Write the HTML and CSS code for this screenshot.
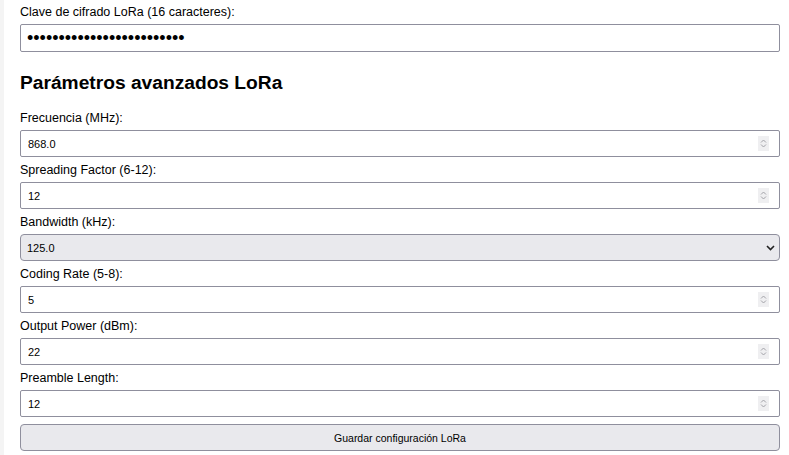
FILE: index.html
```html
<!DOCTYPE html>
<html lang="es">
<head>
    <meta charset="UTF-8">
    <meta name="viewport" content="width=device-width, initial-scale=1.0">
    <title>Configuración LoRa</title>
    <link rel="stylesheet" href="styles.css">
</head>
<body>
    <div class="panel">
        <label for="lora-key">Clave de cifrado LoRa (16 caracteres):</label>
        <input type="password" id="lora-key" class="field password" value="abcdefghijklmnopqrstuvwxy">

        <h2>Parámetros avanzados LoRa</h2>

        <label for="freq">Frecuencia (MHz):</label>
        <div class="num">
            <input type="number" id="freq" class="field" value="868.0" step="0.1">
            <svg class="spin" width="11" height="15" viewBox="0 0 11 15"><rect width="11" height="15" fill="#efeff1"/><path d="M3 6.5 L5.5 4 L8 6.5 M3 8.5 L5.5 11 L8 8.5" fill="none" stroke="#a2a2a8" stroke-width="1"/></svg>
        </div>

        <label for="sf">Spreading Factor (6-12):</label>
        <div class="num">
            <input type="number" id="sf" class="field" value="12" min="6" max="12">
            <svg class="spin" width="11" height="15" viewBox="0 0 11 15"><rect width="11" height="15" fill="#efeff1"/><path d="M3 6.5 L5.5 4 L8 6.5 M3 8.5 L5.5 11 L8 8.5" fill="none" stroke="#a2a2a8" stroke-width="1"/></svg>
        </div>

        <label for="bw">Bandwidth (kHz):</label>
        <div class="select-wrap">
            <select id="bw" class="field select">
                <option>125.0</option>
                <option>250.0</option>
                <option>500.0</option>
            </select>
            <svg class="caret" width="9" height="6" viewBox="0 0 9 6"><path d="M1 1 L4.5 4.5 L8 1" fill="none" stroke="#222" stroke-width="1.6"/></svg>
        </div>

        <label for="cr">Coding Rate (5-8):</label>
        <div class="num">
            <input type="number" id="cr" class="field" value="5" min="5" max="8">
            <svg class="spin" width="11" height="15" viewBox="0 0 11 15"><rect width="11" height="15" fill="#efeff1"/><path d="M3 6.5 L5.5 4 L8 6.5 M3 8.5 L5.5 11 L8 8.5" fill="none" stroke="#a2a2a8" stroke-width="1"/></svg>
        </div>

        <label for="power">Output Power (dBm):</label>
        <div class="num">
            <input type="number" id="power" class="field" value="22">
            <svg class="spin" width="11" height="15" viewBox="0 0 11 15"><rect width="11" height="15" fill="#efeff1"/><path d="M3 6.5 L5.5 4 L8 6.5 M3 8.5 L5.5 11 L8 8.5" fill="none" stroke="#a2a2a8" stroke-width="1"/></svg>
        </div>

        <label for="preamble">Preamble Length:</label>
        <div class="num">
            <input type="number" id="preamble" class="field" value="12">
            <svg class="spin" width="11" height="15" viewBox="0 0 11 15"><rect width="11" height="15" fill="#efeff1"/><path d="M3 6.5 L5.5 4 L8 6.5 M3 8.5 L5.5 11 L8 8.5" fill="none" stroke="#a2a2a8" stroke-width="1"/></svg>
        </div>

        <button class="save-btn">Guardar configuración LoRa</button>
    </div>
</body>
</html>
```

FILE: styles.css
```css
body {
    margin: 0;
    background-color: #f4f4f4;
    font-family: "Liberation Sans", Arial, sans-serif;
    font-size: 12.5px;
    color: #000;
    overflow: hidden;
}
.panel {
    display: flow-root;
    background-color: #fff;
    margin-left: 4px;
    padding: 0 9px 0 16px;
    height: 455px;
    box-sizing: border-box;
}
label {
    display: block;
    line-height: 16px;
    margin: 5px 0 4px;
}
.panel > label:first-child {
    margin-top: 4px;
}
.field {
    display: block;
    width: 100%;
    height: 27px;
    box-sizing: border-box;
    margin: 0;
    padding: 0 7px;
    border: 1px solid #8f8f9d;
    border-radius: 2px;
    background-color: #fff;
    font-family: "Liberation Sans", Arial, sans-serif;
    font-size: 11px;
    color: #000;
    outline: none;
}
.password {
    height: 28px;
    font-size: 18px;
    padding-left: 6px;
}
h2 {
    font-size: 19.2px;
    margin: 20px 0 16px;
}
.num, .select-wrap {
    position: relative;
}
.num input::-webkit-inner-spin-button,
.num input::-webkit-outer-spin-button {
    -webkit-appearance: none;
    margin: 0;
}
.spin {
    position: absolute;
    right: 11px;
    top: 6px;
}
.select {
    -webkit-appearance: none;
    appearance: none;
    background-color: #e9e9ed;
    border-radius: 4px;
    padding-left: 6px;
}
.caret {
    position: absolute;
    right: 5px;
    top: 11px;
    pointer-events: none;
}
.save-btn {
    display: block;
    width: 100%;
    height: 27px;
    margin-top: 7px;
    border: 1px solid #8f8f9d;
    border-radius: 4px;
    background-color: #e9e9ed;
    font-family: "Liberation Sans", Arial, sans-serif;
    font-size: 10.5px;
    color: #000;
}
```
